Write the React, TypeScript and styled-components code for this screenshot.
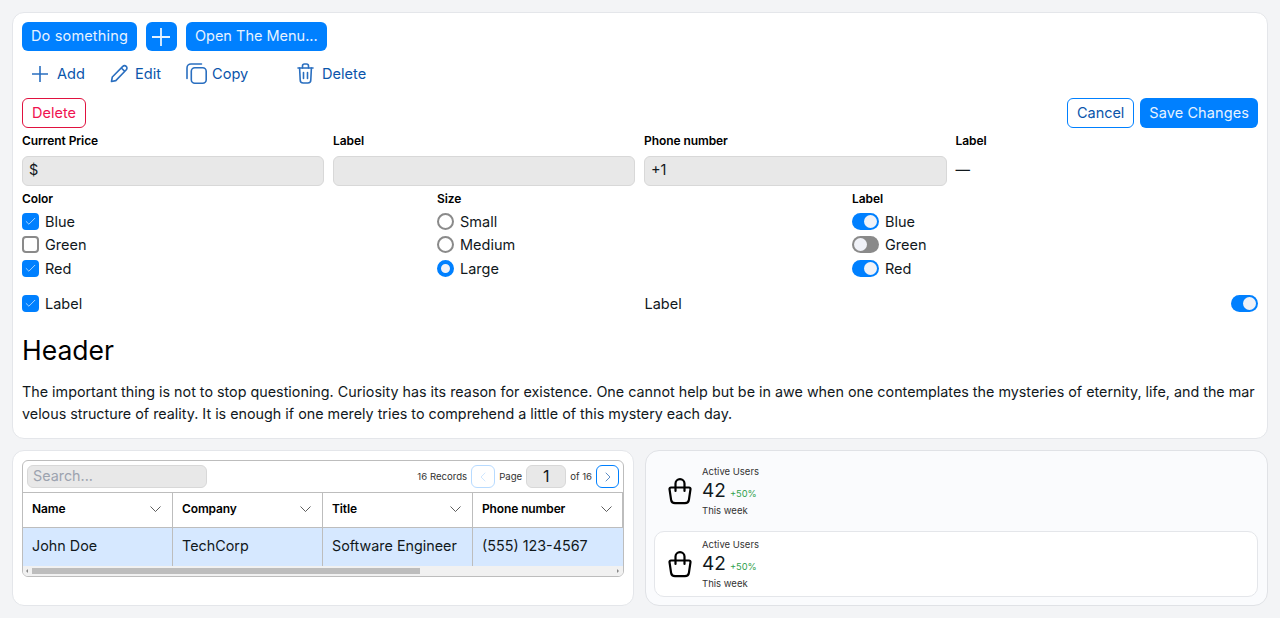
import React from 'react';
import styled, { createGlobalStyle } from 'styled-components';
import { Check, ChevronLeft, ChevronRight } from 'lucide-react';

const BLUE = '#0080ff';
const LINK = '#0a55ab';
const ICON = '#2a6fc0';

const GlobalStyle = createGlobalStyle`
  html, body {
    margin: 0;
    background: #f3f4f6;
    font-family: Inter, "Liberation Sans", sans-serif;
    color: #11181c;
  }
  * { box-sizing: border-box; }
`;

const OPTIONS = ['Blue', 'Green', 'Red'];

function PlusIcon({ size }: { size: number }) {
  return (
    <svg width={size} height={size} viewBox="0 0 16 16" fill="none" stroke="currentColor" strokeWidth="1.6">
      <path d="M8 0v16M0 8h16" />
    </svg>
  );
}

function PencilIcon() {
  return (
    <svg width="19" height="19" viewBox="0 0 19 19" fill="none" stroke={ICON} strokeWidth="1.6" strokeLinejoin="round">
      <path d="M1.5 17.5 2.3 13 12.8 2.4a2.3 2.3 0 0 1 3.5 3.3L5.8 16.6Z" />
      <path d="m11.3 4 3.5 3.4" />
    </svg>
  );
}

function CopyIcon() {
  return (
    <svg width="21" height="21" viewBox="0 0 21 21" fill="none" stroke={ICON} strokeWidth="1.6">
      <rect x="5.3" y="4.8" width="14.9" height="15.4" rx="3.5" />
      <path d="M15.5 1H5a4 4 0 0 0-4 4v10.5" strokeLinecap="round" />
    </svg>
  );
}

function TrashIcon() {
  return (
    <svg width="17" height="21" viewBox="0 0 17 21" fill="none" stroke={ICON} strokeWidth="1.6" strokeLinecap="round">
      <path d="M1 5h15" />
      <path d="M5.5 5V3a2 2 0 0 1 2-2h2a2 2 0 0 1 2 2v2" />
      <path d="m2.6 5 .6 12a3 3 0 0 0 3 3h4.6a3 3 0 0 0 3-3l.6-12" />
      <path d="M6.5 9.5v6M10.5 9.5v6" />
    </svg>
  );
}

function BagIcon() {
  return (
    <svg width="24" height="27" viewBox="0 0 24 27" fill="none" stroke="#000" strokeWidth="2.2" strokeLinecap="round">
      <path d="M3 9.5h18a1.5 1.5 0 0 1 1.5 1.7l-1.6 10.6a4 4 0 0 1-4 3.4H7.1a4 4 0 0 1-4-3.4L1.5 11.2A1.5 1.5 0 0 1 3 9.5Z" />
      <path d="M7.5 13V5.6a4.5 4.5 0 0 1 9 0V13" />
    </svg>
  );
}

function SortIcon() {
  return (
    <svg width="11" height="6" viewBox="0 0 11 6" fill="none" stroke="#333" strokeWidth="0.8">
      <path d="m.5.5 5 5 5-5" />
    </svg>
  );
}

function App() {
  return (
    <Page>
      <GlobalStyle />
      <TopCard>
        <ButtonRow>
          <SolidButton $tracking={0.16}>Do something</SolidButton>
          <IconButton><PlusIcon size={18} /></IconButton>
          <SolidButton>Open The Menu...</SolidButton>
        </ButtonRow>

        <GhostRow>
          <GhostButton $width={78} $gap={9}><IconSlot $color={ICON}><PlusIcon size={16} /></IconSlot>Add</GhostButton>
          <GhostButton $width={76} $gap={6}><PencilIcon />Edit</GhostButton>
          <GhostButton $width={111} $gap={5}><CopyIcon />Copy</GhostButton>
          <GhostButton $width={90} $gap={8}><TrashIcon />Delete</GhostButton>
        </GhostRow>

        <ActionRow>
          <DangerButton>Delete</DangerButton>
          <ActionGroup>
            <OutlineButton $tracking={-0.05}>Cancel</OutlineButton>
            <TallButton $tracking={0.1}>Save Changes</TallButton>
          </ActionGroup>
        </ActionRow>

        <FieldGrid>
          <Field>
            <FieldLabel>Current Price</FieldLabel>
            <FakeInput>$</FakeInput>
          </Field>
          <Field>
            <FieldLabel>Label</FieldLabel>
            <FakeInput />
          </Field>
          <Field>
            <FieldLabel>Phone number</FieldLabel>
            <FakeInput>+1</FakeInput>
          </Field>
          <Field>
            <FieldLabel>Label</FieldLabel>
            <PlainValue>—</PlainValue>
          </Field>
        </FieldGrid>

        <ChoiceGrid>
          <div>
            <GroupLabel>Color</GroupLabel>
            {OPTIONS.map(option => (
              <Choice key={option}>
                <Checkbox $checked={option !== 'Green'}>
                  {option !== 'Green' && <Check size={13} strokeWidth={1.2} />}
                </Checkbox>
                {option}
              </Choice>
            ))}
          </div>
          <div>
            <GroupLabel>Size</GroupLabel>
            {['Small', 'Medium', 'Large'].map(option => (
              <Choice key={option}>
                <Radio $checked={option === 'Large'} />
                {option}
              </Choice>
            ))}
          </div>
          <div>
            <GroupLabel>Label</GroupLabel>
            {OPTIONS.map(option => (
              <Choice key={option}>
                <Toggle $on={option !== 'Green'} />
                {option}
              </Choice>
            ))}
          </div>
        </ChoiceGrid>

        <InlineRow>
          <Choice>
            <Checkbox $checked><Check size={13} strokeWidth={1.2} /></Checkbox>
            Label
          </Choice>
          <ToggleLine>
            Label
            <Toggle $on />
          </ToggleLine>
        </InlineRow>

        <Header>Header</Header>
        <Paragraph>
          The important thing is not to stop questioning. Curiosity has its reason for existence. One cannot help but be in awe when one contemplates the mysteries of eternity, life, and the marvelous structure of reality. It is enough if one merely tries to comprehend a little of this mystery each day.
        </Paragraph>
      </TopCard>

      <BottomRow>
        <TableCard>
          <TableFrame>
            <TableToolbar>
              <SearchBox>Search...</SearchBox>
              <Pager>
                <PagerText>16 Records</PagerText>
                <PageButton $active={false}><ChevronLeft size={16} strokeWidth={1} /></PageButton>
                <PagerText>Page</PagerText>
                <PageNumber>1</PageNumber>
                <PagerText>of 16</PagerText>
                <PageButton $active><ChevronRight size={16} strokeWidth={1} /></PageButton>
              </Pager>
            </TableToolbar>
            <Columns>
              {['Name', 'Company', 'Title', 'Phone number'].map(title => (
                <HeadCell key={title}>
                  {title}
                  <SortIcon />
                </HeadCell>
              ))}
            </Columns>
            <Columns>
              {['John Doe', 'TechCorp', 'Software Engineer', '(555) 123-4567'].map(value => (
                <BodyCell key={value}>{value}</BodyCell>
              ))}
            </Columns>
            <ScrollTrack>
              <ScrollArrow $side="left" />
              <ScrollThumb />
              <ScrollArrow $side="right" />
            </ScrollTrack>
          </TableFrame>
        </TableCard>

        <StatsCard>
          <Stat $boxed={false} />
          <Stat $boxed />
        </StatsCard>
      </BottomRow>
    </Page>
  );
}

function Stat({ $boxed }: { $boxed: boolean }) {
  return (
    <StatBox $boxed={$boxed}>
      <BagIcon />
      <StatText>
        <StatCaption>Active Users</StatCaption>
        <StatValue>42<StatDelta>+50%</StatDelta></StatValue>
        <StatCaption>This week</StatCaption>
      </StatText>
    </StatBox>
  );
}

const Page = styled.div`
  width: 1280px;
  height: 618px;
  padding: 12px;
  overflow: hidden;
`;

const TopCard = styled.section`
  height: 427px;
  padding: 9px;
  background: #fff;
  border: 1px solid #e4e6ea;
  border-radius: 12px;
`;

const ButtonRow = styled.div`
  display: flex;
  gap: 9px;
`;

const SolidButton = styled.button<{ $tracking?: number }>`
  height: 29px;
  padding: 0 9px 2px;
  border: none;
  border-radius: 6px;
  background: ${BLUE};
  color: #e6f2ff;
  font: 400 14.5px Inter, sans-serif;
  letter-spacing: ${props => props.$tracking ?? 0}px;
`;

const IconButton = styled(SolidButton)`
  width: 31px;
  padding: 1px 0 0;
  display: flex;
  align-items: center;
  justify-content: center;
`;

const TallButton = styled(SolidButton)`
  height: 30px;
  padding-bottom: 1px;
`;

const GhostRow = styled.div`
  display: flex;
  height: 30px;
  margin-top: 7px;
  padding-left: 10px;
`;

const GhostButton = styled.div<{ $width: number; $gap: number }>`
  display: flex;
  align-items: center;
  gap: ${props => props.$gap}px;
  width: ${props => props.$width}px;
  padding-top: 1px;
  color: ${LINK};
  font-size: 14.6px;
`;

const IconSlot = styled.span<{ $color: string }>`
  display: flex;
  color: ${props => props.$color};
`;

const ActionRow = styled.div`
  display: flex;
  justify-content: space-between;
  margin-top: 10px;
`;

const ActionGroup = styled.div`
  display: flex;
  gap: 6px;
`;

const OutlineButton = styled(TallButton)`
  background: #fff;
  border: 1px solid ${BLUE};
  color: ${LINK};
`;

const DangerButton = styled(OutlineButton)`
  border-color: #e0123f;
  color: #f0124f;
`;

const FieldGrid = styled.div`
  display: grid;
  grid-template-columns: 302px 302px 302.5px 1fr;
  gap: 9px;
  margin-top: 5px;
`;

const Field = styled.div`
  display: flex;
  flex-direction: column;
`;

const FieldLabel = styled.label`
  height: 23px;
  font-size: 12px;
  font-weight: 600;
  line-height: 16px;
  letter-spacing: -0.08px;
  color: #000;
`;

const FakeInput = styled.div`
  height: 30px;
  padding: 0 6px;
  background: #e8e8e8;
  border: 1px solid #d8d8d8;
  border-radius: 6px;
  font-size: 14.5px;
  line-height: 26px;
`;

const PlainValue = styled.div`
  height: 30px;
  line-height: 28px;
  font-size: 14.5px;
`;

const ChoiceGrid = styled.div`
  display: grid;
  grid-template-columns: repeat(3, 1fr);
  gap: 9px;
  margin-top: 5px;
`;

const GroupLabel = styled.div`
  height: 18.5px;
  font-size: 12px;
  font-weight: 600;
  line-height: 16px;
  letter-spacing: -0.08px;
  color: #000;
`;

const Choice = styled.div`
  display: flex;
  align-items: center;
  gap: 6px;
  height: 23.5px;
  font-size: 14.5px;
`;

const Checkbox = styled.span<{ $checked?: boolean }>`
  display: flex;
  align-items: center;
  justify-content: center;
  width: 17px;
  height: 17px;
  border-radius: 4px;
  border: 2px solid ${props => (props.$checked ? BLUE : '#8a8a8a')};
  background: ${props => (props.$checked ? BLUE : '#fff')};
  color: #fff;
`;

const Radio = styled.span<{ $checked?: boolean }>`
  width: 17px;
  height: 17px;
  border-radius: 50%;
  border: ${props => (props.$checked ? `4px solid ${BLUE}` : '2px solid #8a8a8a')};
  background: ${props => (props.$checked ? '#f0f2f8' : '#fff')};
`;

const Toggle = styled.span<{ $on?: boolean }>`
  display: flex;
  justify-content: ${props => (props.$on ? 'flex-end' : 'flex-start')};
  width: 27px;
  height: 17px;
  padding: 2px;
  border-radius: 9px;
  background: ${props => (props.$on ? BLUE : '#8a8a8a')};

  &::after {
    content: '';
    width: 13px;
    height: 13px;
    border-radius: 50%;
    background: #f0f2f8;
  }
`;

const InlineRow = styled.div`
  display: grid;
  grid-template-columns: 1fr 1fr;
  gap: 9px;
  margin-top: 11.5px;
`;

const ToggleLine = styled(Choice)`
  justify-content: space-between;
`;

const Header = styled.h2`
  margin: 17px 0 0;
  font-size: 26.5px;
  font-weight: 400;
  line-height: 36px;
  color: #000;
`;

const Paragraph = styled.p`
  margin: 13px 0 0;
  font-size: 14.33px;
  line-height: 22px;
  word-break: break-all;
`;

const BottomRow = styled.div`
  display: grid;
  grid-template-columns: 622px 623px;
  gap: 11px;
  margin-top: 11px;
`;

const TableCard = styled.section`
  height: 156px;
  padding: 9px;
  background: #fff;
  border: 1px solid #e4e6ea;
  border-radius: 12px;
`;

const TableFrame = styled.div`
  height: 117px;
  border: 1px solid #bdbdbd;
  border-radius: 6px;
  overflow: hidden;
`;

const TableToolbar = styled.div`
  display: flex;
  align-items: center;
  justify-content: space-between;
  height: 32px;
  padding: 0 4px;
  border-bottom: 1px solid #bdbdbd;
`;

const SearchBox = styled.div`
  width: 180px;
  height: 23px;
  padding: 0 5px;
  background: #e8e8e8;
  border: 1px solid #d8d8d8;
  border-radius: 6px;
  color: #9ca3af;
  font-size: 14.35px;
  line-height: 20px;
`;

const Pager = styled.div`
  display: flex;
  align-items: center;
  gap: 4px;
`;

const PagerText = styled.span`
  font-size: 9.6px;
  color: #333;
`;

const PageButton = styled.span<{ $active: boolean }>`
  display: flex;
  align-items: center;
  justify-content: center;
  width: ${props => (props.$active ? 23 : 24)}px;
  height: 23px;
  border: 1px solid ${props => (props.$active ? BLUE : '#b8dbff')};
  border-radius: 6px;
  color: ${props => (props.$active ? LINK : '#b8dbff')};
`;

const PageNumber = styled.span`
  width: 40px;
  height: 23px;
  background: #e8e8e8;
  border: 1px solid #d8d8d8;
  border-radius: 6px;
  text-align: center;
  font-size: 16px;
  line-height: 20px;
`;

const Columns = styled.div`
  display: grid;
  grid-template-columns: repeat(4, 150px);
  width: 100%;
  border-right: 1px solid #bdbdbd;
`;

const HeadCell = styled.div`
  display: flex;
  align-items: center;
  justify-content: space-between;
  height: 35px;
  padding: 0 11px 3px 9px;
  border-right: 1px solid #bdbdbd;
  border-bottom: 1px solid #bdbdbd;
  font-size: 12px;
  font-weight: 600;
  letter-spacing: -0.12px;
  color: #000;

  &:last-child { border-right: none; }
`;

const BodyCell = styled.div`
  height: 38px;
  padding: 0 9px;
  background: #d6e8ff;
  border-right: 1px solid #bdbdbd;
  font-size: 14.35px;
  line-height: 36px;

  &:last-child { border-right: none; }
`;

const ScrollTrack = styled.div`
  display: flex;
  align-items: center;
  height: 10px;
  background: #f1f1f1;
`;

const ScrollArrow = styled.span<{ $side: 'left' | 'right' }>`
  width: 0;
  height: 0;
  margin: 0 4px 0 3px;
  border-top: 2px solid transparent;
  border-bottom: 2px solid transparent;
  border-${props => (props.$side === 'left' ? 'right' : 'left')}: 2px solid #888;
`;

const ScrollThumb = styled.span`
  width: 388px;
  height: 6px;
  margin-right: auto;
  background: #bdbdbd;
`;

const StatsCard = styled.section`
  height: 156px;
  padding: 7px 9px 8px 8px;
  background: #fafbfd;
  border: 1px solid #e0e2e6;
  border-radius: 14px;
`;

const StatBox = styled.div<{ $boxed: boolean }>`
  display: flex;
  align-items: center;
  gap: 10px;
  height: 66px;
  margin-top: ${props => (props.$boxed ? '7px' : '0')};
  padding: 0 13px;
  background: ${props => (props.$boxed ? '#fff' : 'transparent')};
  border: 1px solid ${props => (props.$boxed ? '#e4e6ea' : 'transparent')};
  border-radius: 10px;
`;

const StatText = styled.div`
  display: flex;
  flex-direction: column;
`;

const StatCaption = styled.span`
  font-size: 9.5px;
  line-height: 13px;
  color: #333;
`;

const StatValue = styled.span`
  display: flex;
  align-items: baseline;
  gap: 4px;
  height: 26px;
  font-size: 19px;
  line-height: 26px;
`;

const StatDelta = styled.span`
  font-size: 9.3px;
  line-height: 1;
  color: #30a14e;
`;

export default App;
